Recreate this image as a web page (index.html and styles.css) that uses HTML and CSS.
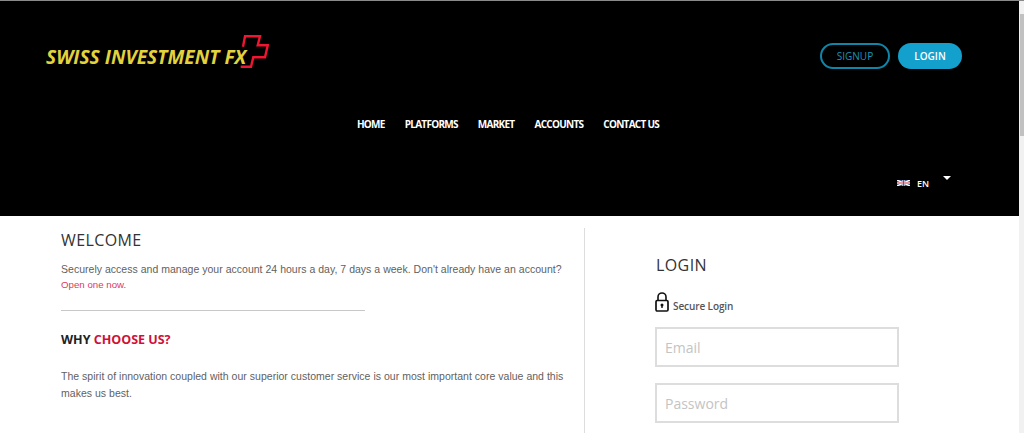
FILE: index.html
```html
<!DOCTYPE html>
<html lang="en">

<head>
  <meta charset="UTF-8">
  <meta name="viewport" content="width=device-width, initial-scale=1.0">
  <title>Swiss Investment FX</title>

  <link rel="stylesheet" href="styles.css">
</head>

<body>
  <div class="page">
    <div class="main">
      <header class="site-header">
        <div class="top-row">
          <a class="logo" href="#">
            <span class="logo-text">SWISS INVESTMENT FX</span>
            <svg class="logo-cross" width="29" height="33" viewBox="0 0 29 33">
              <path d="M3 11.7L5 1.2H20L17.7 10.2H27.8L25 22.3H13.3L11 31.7H0.7" fill="none" stroke="#f01530" stroke-width="2.4" />
            </svg>
          </a>
          <div class="auth-btns">
            <a class="btn btn-outline" href="#">SIGNUP</a>
            <a class="btn btn-fill" href="#">LOGIN</a>
          </div>
        </div>
        <nav class="main-nav">
          <a href="#">HOME</a>
          <a href="#">PLATFORMS</a>
          <a href="#">MARKET</a>
          <a href="#">ACCOUNTS</a>
          <a href="#">CONTACT US</a>
        </nav>
        <div class="lang">
          <svg class="flag" width="13" height="6" viewBox="0 0 13 6">
            <rect width="13" height="6" fill="#3b5a9a" />
            <path d="M0 0L13 6M13 0L0 6" stroke="#fff" stroke-width="1.4" />
            <path d="M6.5 0V6M0 3H13" stroke="#fff" stroke-width="2" />
            <path d="M6.5 0V6M0 3H13" stroke="#d8303f" stroke-width="1" />
          </svg>
          <span class="lang-code">EN</span>
          <span class="caret"></span>
        </div>
      </header>

      <section class="content">
        <div class="col-left">
          <h2 class="welcome">WELCOME</h2>
          <p class="intro">Securely access and manage your account 24 hours a day, 7 days a week. Don't already have an account?</p>
          <a class="open-link" href="#">Open one now.</a>
          <hr class="rule">
          <h3 class="why">WHY <span>CHOOSE US?</span></h3>
          <p class="why-text">The spirit of innovation coupled with our superior customer service is our most important core value and this makes us best.</p>
        </div>
        <div class="col-right">
          <h2 class="login-title">LOGIN</h2>
          <div class="secure">
            <svg class="lock" width="14" height="20" viewBox="0 0 14 20">
              <path d="M3 9V5a4 4 0 0 1 8 0v4" fill="none" stroke="#111" stroke-width="1.6" />
              <rect x="1" y="8.5" width="12" height="10.5" rx="1.2" fill="none" stroke="#111" stroke-width="1.7" />
              <circle cx="7" cy="13" r="1.5" fill="#111" />
              <rect x="6.3" y="13" width="1.4" height="3" fill="#111" />
            </svg>
            <span>Secure Login</span>
          </div>
          <input class="field" type="text" placeholder="Email">
          <input class="field" type="password" placeholder="Password">
        </div>
      </section>
    </div>
    <div class="scrollbar">
      <div class="thumb"></div>
    </div>
  </div>
</body>

</html>
```

FILE: styles.css
```css
* {
  box-sizing: border-box;
}

html,
body {
  margin: 0;
  height: 100%;
  overflow: hidden;
}

body {
  background: #fff;
  font-family: "Open Sans", "Liberation Sans", sans-serif;
}

a {
  text-decoration: none;
}

.page {
  display: flex;
  height: 433px;
  border-top: 1px solid #8a8a8a;
}

.main {
  flex: 1;
  min-width: 0;
}

.scrollbar {
  width: 5px;
  background: #f1f1f1;
  padding: 13px 0 0 1px;
}

.thumb {
  height: 122px;
  background: #c1c1c1;
}

/* header */
.site-header {
  height: 215px;
  background: #000;
  padding: 33px 57px 0 46px;
}

.top-row {
  display: flex;
  justify-content: space-between;
  align-items: flex-start;
}

.logo {
  display: flex;
  align-items: flex-start;
}

.logo-text {
  margin-top: 10px;
  font-size: 19.2px;
  line-height: 25px;
  font-weight: 700;
  font-style: italic;
  color: #e2d23c;
  white-space: nowrap;
}

.logo-cross {
  margin: 1px 0 0 -6px;
}

.auth-btns {
  display: flex;
  gap: 8px;
  margin-top: 9px;
}

.btn {
  display: block;
  height: 26px;
  border-radius: 13px;
  font-size: 10px;
  line-height: 26px;
  text-align: center;
}

.btn-outline {
  width: 70px;
  border: 2px solid #0f86a8;
  line-height: 22px;
  color: #1a94b6;
}

.btn-fill {
  width: 64px;
  background: #14a0cc;
  color: #fff;
  font-weight: 600;
}

.main-nav {
  display: flex;
  justify-content: center;
  gap: 20px;
  margin-top: 47px;
  padding-left: 8px;
}

.main-nav a {
  font-size: 10px;
  line-height: 16px;
  font-weight: 700;
  letter-spacing: -0.72px;
  color: #fff;
}

.lang {
  display: flex;
  align-items: flex-start;
  margin-top: 44px;
  margin-left: 851px;
}

.flag {
  margin-top: 4px;
}

.lang-code {
  display: block;
  width: 13px;
  margin: 2px 0 0 7px;
  font-size: 9px;
  line-height: 11px;
  font-weight: 600;
  color: #fff;
}

.caret {
  margin: 0 0 0 13px;
  border-left: 4px solid transparent;
  border-right: 4px solid transparent;
  border-top: 4px solid #fff;
}

/* content */
.content {
  display: flex;
  padding: 12px 0 0 61px;
  height: 217px;
}

.col-left {
  width: 524px;
  padding-right: 20px;
  border-right: 1px solid #ddd;
}

.welcome {
  margin: 0;
  font-size: 16px;
  line-height: 24px;
  font-weight: 500;
  letter-spacing: 0.4px;
  color: #333;
}

.intro {
  margin: 9px 0 0;
  font-family: "Liberation Sans", Arial, sans-serif;
  font-size: 10.5px;
  line-height: 16px;
  letter-spacing: 0.02px;
  color: #5f5f5f;
}

.open-link {
  display: block;
  font-family: "Liberation Sans", Arial, sans-serif;
  font-size: 9.7px;
  line-height: 16px;
  color: #e0365c;
}

.rule {
  width: 304px;
  height: 1px;
  margin: 17px 0 0;
  border: 0;
  background: #c8c8c8;
}

.why {
  margin: 20px 0 0;
  font-size: 12.5px;
  line-height: 18px;
  font-weight: 700;
  color: #222;
}

.why span {
  color: #d0103a;
}

.why-text {
  margin: 19px 0 0;
  font-family: "Liberation Sans", Arial, sans-serif;
  font-size: 10.5px;
  line-height: 17px;
  letter-spacing: 0.02px;
  color: #5f5f5f;
}

.col-right {
  padding: 25px 0 0 70px;
}

.login-title {
  margin: 0 0 0 1px;
  font-size: 16px;
  line-height: 24px;
  font-weight: 500;
  letter-spacing: 0.4px;
  color: #333;
}

.secure {
  display: flex;
  align-items: flex-end;
  gap: 4px;
  margin-top: 15px;
  font-size: 10px;
  line-height: 11px;
  font-weight: 600;
  letter-spacing: -0.1px;
  color: #555;
}

.field {
  display: block;
  width: 244px;
  height: 40px;
  margin-top: 16px;
  padding: 0 8px;
  border: 2px solid #ddd;
  border-radius: 0;
  outline: 0;
  background: #fff;
  font-family: "Open Sans", sans-serif;
  font-size: 14px;
}

.field::placeholder {
  color: #c4c4c4;
  opacity: 1;
}

.secure + .field {
  margin-top: 15px;
}
```
